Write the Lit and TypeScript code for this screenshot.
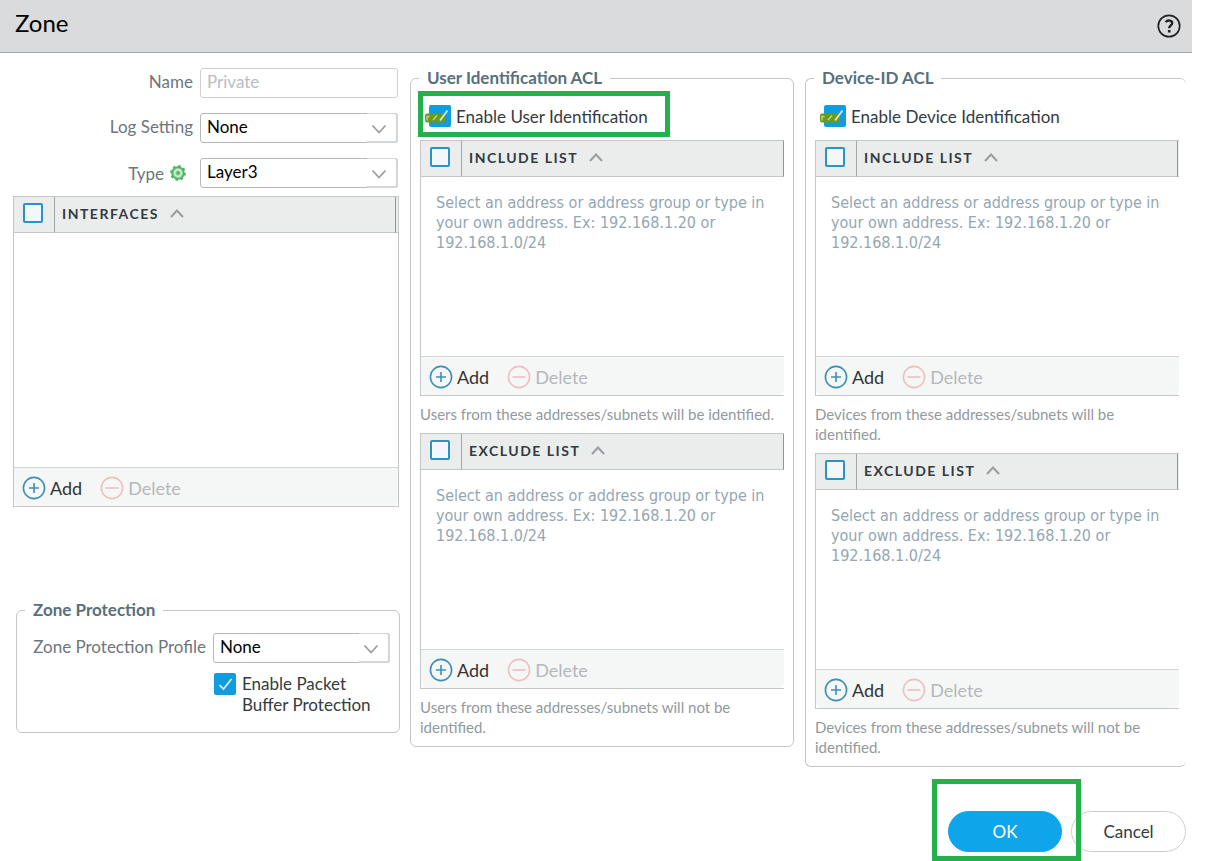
import { LitElement, html, css, svg, nothing } from "lit";
import { customElement, property } from "lit/decorators.js";

const tick = svg`<path d="M5.500 12 L9.500 16 L17.500 6" fill="none" stroke="#e8f6fd" stroke-width="1.600"/>`;

@customElement("entry-list")
class EntryList extends LitElement {
  @property() heading = "";
  @property() hint = "";
  @property({ type: Boolean, reflect: true }) tall = false;
  @property({ type: Boolean, reflect: true }) closed = false;
  @property({ type: Boolean, reflect: true }) inset = false;

  static styles = css`
    :host { display: block; }
    .frame { border: 1px solid #c3c7ca; border-right: 0; background: #fff; }
    :host([closed]) .frame { border-right: 1px solid #c3c7ca; }
    .grid { width: 100%; border-collapse: separate; border-spacing: 0; table-layout: fixed; }
    th { background: #ebeded; border-bottom: 1px solid #c3c7ca; height: 35px; padding: 0; text-align: left; font-weight: 700; }
    .pick { width: 40px; border-right: 1px solid #a3a8ac; }
    .pick input { appearance: none; display: block; width: 20px; height: 20px; margin: 0 0 4px 9px; border: 2px solid #2a93c3; border-radius: 2px; background: #f3f7f9; }
    .name { border-right: 1px solid #8f9498; }
    .title { display: flex; align-items: center; gap: 11px; padding: 0 0 2px 7px; font: 700 14px/20px Lato, sans-serif; letter-spacing: 1.5px; color: #333b41; }
    .gutter { width: 1px; }
    :host([closed]) .gutter { width: 2px; }
    td { height: 179px; padding: 16px 8px 0 15px; box-sizing: border-box; vertical-align: top; font: 16px/20px "DejaVu Sans Condensed", "DejaVu Sans", sans-serif; color: #94a6b3; }
    :host([tall]) td { height: 234px; }
    .bar { display: flex; align-items: center; gap: 18px; height: 38px; padding: 1px 8px 0; box-sizing: border-box; min-height: 39px; border-top: 1px solid #d3d7d9; background: #f5f7f7; border-radius: 0 0 6px 6px; }
    button { display: flex; align-items: center; gap: 4px; margin: 0; padding: 0; border: 0; background: none; font: 18px/24px Lato, sans-serif; color: #333; }
    button:disabled { color: #b5b8ba; }
    svg { display: block; flex: none; }
  `;

  render() {
    return html`
      <div class="frame">
        <table class="grid">
          <thead>
            <tr>
              <th class="pick"><input type="checkbox" aria-label="Select all" /></th>
              <th class="name">
                <span class="title">${this.heading}
                  <svg width="14" height="9" viewBox="0 0 14 9"><path d="M1 8 L7 1.5 L13 8" fill="none" stroke="#999ea1" stroke-width="2" /></svg>
                </span>
              </th>
              ${this.inset ? html`<th class="gutter"></th>` : nothing}
            </tr>
          </thead>
          <tbody>
            <tr><td colspan=${this.inset ? 3 : 2}>${this.hint}</td></tr>
          </tbody>
        </table>
        <div class="bar">
          <button type="button">
            <svg width="24" height="24" viewBox="0 0 24 24" fill="none" stroke="#3d8fb3" stroke-width="1.6"><circle cx="12" cy="12" r="10.6" /><path d="M12 7v10M7 12h10" /></svg>
            Add
          </button>
          <button type="button" disabled>
            <svg width="24" height="24" viewBox="0 0 24 24" fill="none" stroke="#eebfc2" stroke-width="1.6"><circle cx="12" cy="12" r="10.6" /><path d="M5.5 12h13" /></svg>
            Delete
          </button>
        </div>
      </div>
    `;
  }
}

@customElement("app-root")
class AppRoot extends LitElement {
  static styles = css`
    :host { display: block; background: #fff; font: 17px/21px Lato, sans-serif; color: #333b41; }
    .dialog { margin-right: 21px; }
    .head { display: flex; align-items: center; justify-content: space-between; height: 52px; padding: 0 11px 0 15px; border-bottom: 1px solid #a3a8ac; background: #dadbdc; }
    h1 { margin: 0 0 6px; font: 400 24px/30px Lato, sans-serif; color: #000; }
    .help { display: block; padding: 0; border: 0; background: none; }
    svg { display: block; flex: none; }
    .columns { display: grid; grid-template-columns: 386fr 384fr 381fr; gap: 11px; align-items: start; padding: 15px 6px 0 13px; }
    .form { display: grid; grid-template-columns: 180px 1fr; column-gap: 7px; row-gap: 15px; align-items: center; padding-right: 1px; margin-bottom: 8px; }
    .caption { padding-bottom: 3px; text-align: right; color: #6d767c; }
    .typed { display: flex; justify-content: flex-end; align-items: center; gap: 6px; padding: 0 7px 0 0; }
    .text, select { box-sizing: border-box; width: 100%; height: 30px; margin: 0; padding: 0 6px 3px; border: 1px solid #b4b9bc; border-radius: 3px; background: #fff; font: 17px/21px Lato, sans-serif; color: #000; }
    .text { border-color: #cdd0d2; color: #babdbf; }
    select { appearance: none; display: block; }
    .combo { position: relative; }
    .combo svg { position: absolute; right: 11px; top: 11px; }
    .combo::after { content: ""; position: absolute; right: 0; top: 0; width: 31px; height: 100%; box-sizing: border-box; border: solid #d3d6d8; border-width: 1px 2px 2px 0; border-radius: 0 3px 3px 0; pointer-events: none; }
    fieldset { margin: 0; padding: 0 9px; border: 1px solid #c3c7ca; border-radius: 6px; min-width: 0; }
    legend { margin-left: -1px; padding: 0 8px; font: 700 17px/20px Lato, sans-serif; color: #57707d; }
    .open { border-right: 0; padding-right: 7px; }
    .protect { margin: 93px -1px 0 3px; padding-bottom: 17px; }
    .profile { display: grid; grid-template-columns: auto 177px; gap: 10px 7px; justify-content: end; align-items: center; padding-top: 13px; }
    .check { position: relative; display: flex; align-items: center; gap: 5px; }
    .box { position: relative; flex: none; width: 22px; height: 22px; }
    .box input { appearance: none; display: block; width: 22px; height: 22px; margin: 0; border-radius: 2px; background: #109ddf; }
    .box svg { position: absolute; left: 0; top: 0; overflow: visible; pointer-events: none; }
    .packet { grid-column: 2; align-items: flex-start; padding-left: 1px; gap: 6px; width: 160px; }
    .enable { margin: 17px 0 13px; padding-left: 9px; }
    .note { margin: 8px 0 9px; font: 15px/20px Lato, sans-serif; color: #92999e; }
    .mark { position: absolute; border: 5px solid #24b14c; pointer-events: none; }
    .enable .mark { left: -2px; top: -14px; width: 242px; height: 36px; }
    .actions { display: flex; justify-content: flex-end; gap: 9px; padding: 44px 6px 9px; }
    .actions button { box-sizing: border-box; width: 115px; height: 41px; border: 1px solid #cbced0; border-radius: 21px; background: #fff; font: 17px/21px Lato, sans-serif; color: #333b41; }
    .actions .ok { width: 114px; border-color: #0ea5ea; background: #0ea5ea; color: #fff; }
    .primary { position: relative; }
    .primary .mark { left: -16px; top: -32px; width: 139px; height: 72px; z-index: 1; }
  `;

  combo(id: string, value: string) {
    return html`<div class="combo">
      <select id=${id}><option>${value}</option></select>
      <svg width="16" height="10" viewBox="0 0 16 10"><path d="M1.5 1.5 L8 8.5 L14.5 1.5" fill="none" stroke="#9a9fa2" stroke-width="1.8" /></svg>
    </div>`;
  }

  acl(title: string, kind: string, who: string, open: boolean) {
    const hint = "Select an address or address group or type in your own address. Ex: 192.168.1.20 or 192.168.1.0/24";
    return html`<fieldset class=${open ? "open" : ""}>
      <legend>${title}</legend>
      <label class="check enable">
        <span class="box">
          <input type="checkbox" checked />
          <svg width="22" height="22" viewBox="0 0 22 22">
            <rect x="-4" y="8.5" width="20" height="9" rx="2" fill="#699b16" />
            <path d="M-2 15.500v-4h2.500M4 15l4-4.500" fill="none" stroke="#b9d29a" stroke-width="1.500" />
            <path d="M11 15.500 L18.500 5.500" stroke="#d3e8dc" stroke-width="1.800" />
          </svg>
        </span>
        Enable ${kind} Identification
        ${open ? nothing : html`<span class="mark"></span>`}
      </label>
      <entry-list heading="INCLUDE LIST" hint=${hint} ?inset=${open}></entry-list>
      <p class="note">${who} from these addresses/subnets will be identified.</p>
      <entry-list heading="EXCLUDE LIST" hint=${hint} ?inset=${open}></entry-list>
      <p class="note">${who} from these addresses/subnets will not be identified.</p>
    </fieldset>`;
  }

  render() {
    return html`<main class="dialog">
      <header class="head">
        <h1>Zone</h1>
        <button class="help" type="button" aria-label="Help">
          <svg width="24" height="24" viewBox="0 0 24 24" fill="none" stroke="#222"><circle cx="12" cy="12" r="10.7" stroke-width="1.7" /><path d="M8.800 8.200C10 5.800 15.200 6 15.200 9c0 2.500-3 2.300-3 5.200" stroke-width="2.400" /><path d="M12.200 16v2.500" stroke-width="2.600" /></svg>
        </button>
      </header>
      <div class="columns">
        <section>
          <div class="form">
            <label class="caption" for="name">Name</label>
            <input class="text" id="name" value="Private" disabled />
            <label class="caption" for="log">Log Setting</label>
            ${this.combo("log", "None")}
            <label class="caption typed" for="type">Type
              <svg width="16" height="16" viewBox="0 0 16 16" fill="none" stroke="#4cb55c"><circle cx="8" cy="8" r="6" fill="#8fd09a" stroke-width="1.6" /><circle cx="8" cy="8" r="7" stroke-width="1.8" stroke-dasharray="2.500 3" /><circle cx="8" cy="8" r="3.300" stroke="#e4f5e7" stroke-width="1.200" /><circle cx="8" cy="8" r="1.500" fill="#4cb55c" stroke="none" /></svg>
            </label>
            ${this.combo("type", "Layer3")}
          </div>
          <entry-list heading="INTERFACES" tall closed inset></entry-list>
          <fieldset class="protect">
            <legend>Zone Protection</legend>
            <div class="profile">
              <label class="caption" for="profile">Zone Protection Profile</label>
              ${this.combo("profile", "None")}
              <label class="check packet">
                <span class="box"><input type="checkbox" checked /><svg width="22" height="22" viewBox="0 0 22 22">${tick}</svg></span>
                Enable Packet Buffer Protection
              </label>
            </div>
          </fieldset>
        </section>
        ${this.acl("User Identification ACL", "User", "Users", false)}
        ${this.acl("Device-ID ACL", "Device", "Devices", true)}
      </div>
      <footer class="actions">
        <div class="primary"><button class="ok" type="button">OK</button><span class="mark"></span></div>
        <button type="button">Cancel</button>
      </footer>
    </main>`;
  }
}
